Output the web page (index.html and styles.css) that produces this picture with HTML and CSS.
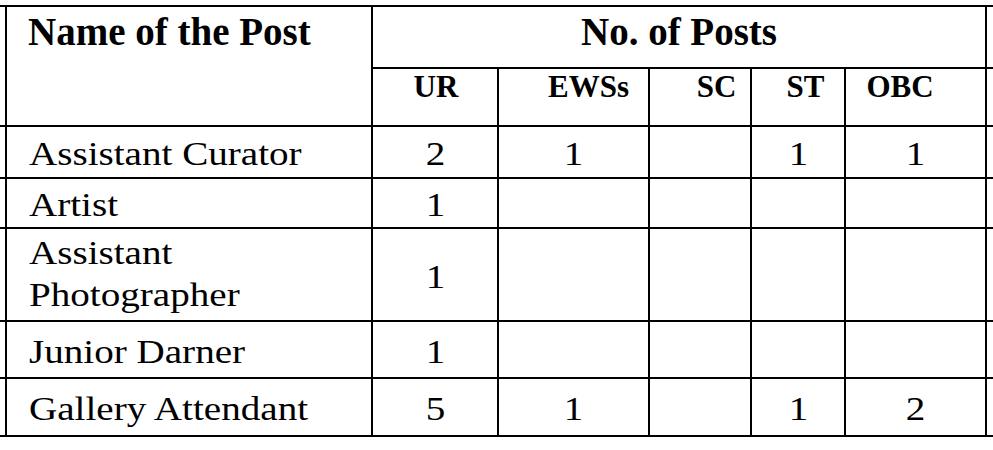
FILE: index.html
```html
<!DOCTYPE html>
<html lang="en">
<head>
<meta charset="utf-8">
<title>No. of Posts</title>
<link rel="stylesheet" href="styles.css">
</head>
<body>
<table class="posts">
  <colgroup>
    <col class="c-stub-l">
    <col class="c-name">
    <col class="c-ur">
    <col class="c-ews">
    <col class="c-sc">
    <col class="c-st">
    <col class="c-obc">
    <col class="c-stub-r">
  </colgroup>
  <thead>
    <tr class="row-h1">
      <th class="stub-l" rowspan="2"></th>
      <th class="name-h" rowspan="2">Name of the Post</th>
      <th class="posts-h" colspan="5">No. of Posts</th>
      <th class="stub-r"></th>
    </tr>
    <tr class="row-h2">
      <th class="sub sub-ur">UR</th>
      <th class="sub sub-ews">EWSs</th>
      <th class="sub sub-sc">SC</th>
      <th class="sub sub-st">ST</th>
      <th class="sub sub-obc">OBC</th>
      <th class="stub-r"></th>
    </tr>
  </thead>
  <tbody>
    <tr class="row-1">
      <td class="stub-l"></td>
      <td class="name"><span class="t">Assistant Curator</span></td>
      <td class="num"><span class="t">2</span></td>
      <td class="num"><span class="t">1</span></td>
      <td class="num"></td>
      <td class="num"><span class="t">1</span></td>
      <td class="num"><span class="t">1</span></td>
      <td class="stub-r"></td>
    </tr>
    <tr class="row-2">
      <td class="stub-l"></td>
      <td class="name"><span class="t">Artist</span></td>
      <td class="num"><span class="t">1</span></td>
      <td class="num"></td>
      <td class="num"></td>
      <td class="num"></td>
      <td class="num"></td>
      <td class="stub-r"></td>
    </tr>
    <tr class="row-3">
      <td class="stub-l"></td>
      <td class="name name-two"><span class="t">Assistant<br>Photographer</span></td>
      <td class="num"><span class="t">1</span></td>
      <td class="num"></td>
      <td class="num"></td>
      <td class="num"></td>
      <td class="num"></td>
      <td class="stub-r"></td>
    </tr>
    <tr class="row-4">
      <td class="stub-l"></td>
      <td class="name"><span class="t">Junior Darner</span></td>
      <td class="num"><span class="t">1</span></td>
      <td class="num"></td>
      <td class="num"></td>
      <td class="num"></td>
      <td class="num"></td>
      <td class="stub-r"></td>
    </tr>
    <tr class="row-5">
      <td class="stub-l"></td>
      <td class="name"><span class="t">Gallery Attendant</span></td>
      <td class="num"><span class="t">5</span></td>
      <td class="num"><span class="t">1</span></td>
      <td class="num"></td>
      <td class="num"><span class="t">1</span></td>
      <td class="num"><span class="t">2</span></td>
      <td class="stub-r"></td>
    </tr>
  </tbody>
</table>
</body>
</html>
```

FILE: styles.css
```css
html, body {
  margin: 0;
  background: #ffffff;
}

body {
  padding-top: 5px;
  font-family: "Liberation Serif", "Times New Roman", serif;
  color: #000000;
}

.posts {
  border-collapse: collapse;
  table-layout: fixed;
  width: 993px;
}

.c-stub-l { width: 6px; }
.c-name   { width: 366px; }
.c-ur     { width: 126px; }
.c-ews    { width: 151px; }
.c-sc     { width: 102px; }
.c-st     { width: 94px; }
.c-obc    { width: 141px; }
.c-stub-r { width: 7px; }

.posts th,
.posts td {
  border: 2px solid #000000;
  padding: 0;
}

.posts .stub-l { border-left-style: none; }
.posts .stub-r { border-right-style: none; }

/* header */
.row-h1 { height: 62px; }
.row-h2 { height: 58px; }

.posts .name-h {
  vertical-align: top;
  text-align: left;
  font-weight: bold;
  font-size: 39px;
  line-height: 45px;
  padding: 2px 0 0 21px;
}

.posts .posts-h {
  vertical-align: top;
  text-align: center;
  font-weight: bold;
  font-size: 39px;
  line-height: 45px;
  padding: 2px 0 0 0;
}

.posts .sub {
  vertical-align: top;
  text-align: center;
  font-weight: bold;
  font-size: 31px;
  line-height: 36px;
  padding: 0;
}

.posts .sub-ur  { padding-left: 2px; }
.posts .sub-ews { padding-left: 30px; }
.posts .sub-sc  { padding-left: 33px; }
.posts .sub-st  { padding-left: 15px; }
.posts .sub-obc { padding-right: 31px; }

/* body rows */
.row-1 { height: 51.5px; }
.row-2 { height: 50.3px; }
.row-3 { height: 93.4px; }
.row-4 { height: 56.8px; }
.row-5 { height: 58.2px; }

.posts .name,
.posts .num {
  vertical-align: middle;
  font-size: 34px;
  line-height: 42.5px;
  padding: 5px 0 0 0;
}

.posts .name {
  text-align: left;
  padding-left: 22px;
}

.posts .name-two {
  vertical-align: top;
  padding-top: 3px;
}

.posts .num {
  text-align: center;
}

.t {
  display: inline-block;
  transform: scaleX(1.15);
}

.name .t { transform-origin: left center; }
.num .t  { transform-origin: center center; }
```
